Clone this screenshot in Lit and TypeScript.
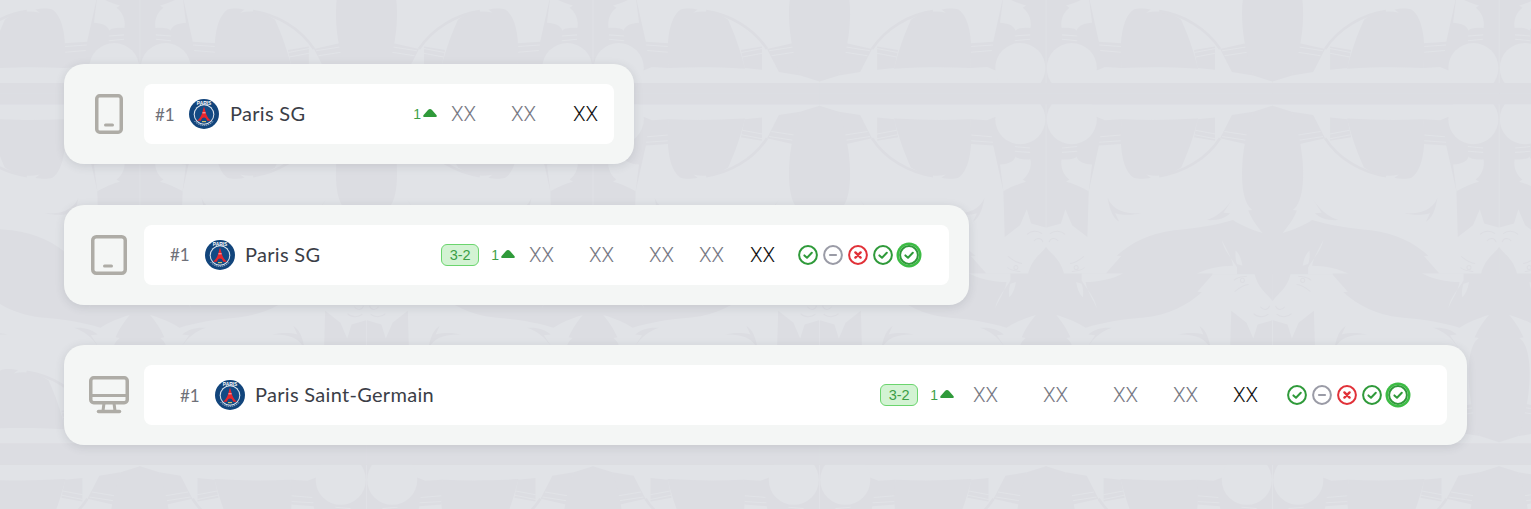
import { LitElement, css, html, svg } from 'lit';
import { customElement, property } from 'lit/decorators.js';

type Form = 'win' | 'draw' | 'loss';

const FORM: Form[] = ['win', 'draw', 'loss', 'win', 'win'];

// backdrop: one traced cell, coordinates are 2.953x screen px from x=1000
const cell = svg`
  <g clip-path="url(#cell-clip)">
    <rect x="130" y="276" width="680" height="32" class="dk" />
    <path class="dk" d="M137 308 L152 308 L285 345 L310 355 L360 352 L358 425 L292 430 L262 565 L258 700 L213 665 L193 618 L180 660 L137 672 Z" />
    <circle class="lt" cx="212" cy="352" r="74" />
    <rect class="dk" x="130" y="276" width="680" height="32" />
    <path class="lt" d="M182 470 C200 472 222 470 226 462 C232 480 250 484 272 486 L262 565 C240 552 215 542 195 537 L205 530 C185 515 178 490 182 470 Z" />
    <path class="ln" d="M183 437 L228 433 M183 450 L228 447 M296 404 L358 399 M293 420 L358 416" />
    <path class="dk" d="M360 352 C352 420 358 500 395 525 C410 530 430 528 445 525 L432 515 C470 525 505 515 535 495 C555 450 570 410 585 350 C500 355 430 355 360 352 Z" />
    <path class="arc" d="M470 520 C540 510 610 470 650 408" />
    <path class="dk" d="M584 352 L635 347 L635 416 L573 405 Z M685 340 L748 330 C740 365 730 395 725 425 L650 408 Z" />
    <path class="ln" d="M577 385 L636 396 M574 398 L636 410 M663 388 L730 399 M656 403 L727 414" />
    <path class="dk" d="M805 312 L748 330 C735 370 720 420 716 480 C712 540 718 585 735 610 L745 620 L733 622 C745 650 760 670 775 688 C745 680 710 665 688 650 C640 665 580 675 515 680 C440 690 390 715 345 755 L358 756 L315 805 L313 812 L808 812 L808 312 Z" />
    <path class="lt" d="M655 708 C665 730 685 760 688 785 C650 785 600 795 570 815 L700 815 L700 790 C690 770 660 740 655 708 Z M696 740 C708 750 714 770 716 785 L700 780 C696 770 694 755 696 740 Z" />
    <path class="dk" d="M685 590 C660 625 640 640 610 650 C640 652 665 645 680 630 L660 628 Z M318 585 C325 625 335 645 352 655 L340 630 C365 637 395 635 415 630 C375 632 335 625 318 585 Z" />
    <path class="dk" d="M137 730 C150 750 180 765 190 812 L130 812 L130 730 Z" />
    <path class="wh" d="M148 690 C160 680 180 680 192 692 M145 715 C150 700 165 702 172 712 M207 778 C215 778 232 770 248 757 M212 802 C225 800 240 800 250 790" />
    <circle class="wh" cx="225" cy="790" r="6" />
  </g>
`;

function backdrop() {
  const uses = [];
  const rows = [
    { d: 1, f: 0, shift: 0 },
    { d: -1, f: 553, shift: 0 },
    { d: -1, f: 1618, shift: 669 },
    { d: 1, f: 1065, shift: 669 },
  ];
  for (const r of rows) {
    for (let k = -4; k <= 2; k++) {
      const e = k * 1338 + r.shift;
      uses.push(svg`<use href="#cell" transform="matrix(1 0 0 ${r.d} ${e} ${r.f})" />`);
      uses.push(svg`<use href="#cell" transform="matrix(-1 0 0 ${r.d} ${1610 + e} ${r.f})" />`);
    }
  }
  return html`
    <svg class="backdrop" width="1531" height="509" viewBox="0 0 1531 509" aria-hidden="true">
      <defs>
        <clipPath id="cell-clip"><rect x="136" y="276" width="670" height="534" /></clipPath>
        <g id="cell">${cell}</g>
      </defs>
      <g transform="translate(1000 0) scale(.3386)">${uses}</g>
    </svg>
  `;
}

@customElement('club-crest')
export class ClubCrest extends LitElement {
  static styles = css`
    :host {
      display: block;
      width: 30px;
      height: 30px;
      flex: none;
    }
    svg {
      display: block;
    }
    text {
      font: 700 4.8px 'Liberation Sans', sans-serif;
      fill: #fff;
    }
  `;

  render() {
    return html`
      <svg width="30" height="30" viewBox="0 0 30 30">
        <circle cx="15" cy="15" r="15" fill="#12457c" />
        <circle cx="15" cy="15.5" r="10.3" fill="#dfe6ee" />
        <circle cx="15" cy="15.5" r="9.3" fill="#134a85" />
        <text x="15" y="5.6" text-anchor="middle">PARIS</text>
        <path d="M15 7.5 L16.6 13 C17.4 16.4 19 19.4 22 21.8 L18.2 21.8 C17.6 19.6 16.4 18.4 15 18.4 C13.6 18.4 12.4 19.6 11.8 21.8 L8 21.8 C11 19.4 12.6 16.4 13.4 13 Z" fill="#e8262d" />
        <path d="M13.4 13.8 H16.6" stroke="#fff" stroke-width=".7" />
        <path d="M13 22.6 H17" stroke="#d8c46a" stroke-width="1.1" />
        <path d="M5.5 22 A12.4 12.4 0 0 0 24.5 22" fill="none" stroke="#a9bdd4" stroke-width="1" stroke-dasharray="1.4 .7" />
      </svg>
    `;
  }
}

@customElement('form-dot')
export class FormDot extends LitElement {
  @property({ type: String }) result: Form = 'win';
  @property({ type: Boolean, reflect: true }) latest = false;

  static styles = css`
    :host {
      display: block;
      width: 20px;
      height: 20px;
      flex: none;
      box-sizing: border-box;
      border-radius: 50%;
    }
    :host([latest]) {
      box-shadow: 0 0 0 2.5px #3cbc44;
    }
    svg {
      display: block;
    }
    .win {
      stroke: #2f9a3a;
    }
    .draw {
      stroke: #9a9ba6;
    }
    .loss {
      stroke: #e13138;
    }
  `;

  render() {
    const mark =
      this.result === 'win'
        ? svg`<path d="M6.4 10.4 L9 12.8 L13.8 7.8" stroke-width="2" />`
        : this.result === 'draw'
          ? svg`<path d="M7 10 H13" stroke-width="2.2" />`
          : svg`<path d="M7.4 7.4 L12.6 12.6 M12.6 7.4 L7.4 12.6" stroke-width="2.4" />`;
    return html`
      <svg class=${this.result} width="20" height="20" viewBox="0 0 20 20" fill="none" stroke-linecap="round" stroke-linejoin="round">
        <circle cx="10" cy="10" r="8.9" stroke-width="2" />
        ${mark}
      </svg>
    `;
  }
}

@customElement('app-root')
export class AppRoot extends LitElement {
  static styles = css`
    :host {
      display: block;
      position: relative;
      width: 1531px;
      height: 509px;
      overflow: hidden;
      background: #e1e3e7;
      font-family: Lato, 'Liberation Sans', sans-serif;
    }
    .backdrop {
      position: absolute;
      inset: 0;
    }
    .backdrop .dk {
      fill: #dcdde2;
    }
    .backdrop .lt {
      fill: #e1e3e7;
    }
    .backdrop .ln {
      fill: none;
      stroke: #e1e3e7;
      stroke-width: 3;
    }
    .backdrop .arc {
      fill: none;
      stroke: #dcdde2;
      stroke-width: 8;
    }
    .backdrop .wh {
      fill: none;
      stroke: #dcdde2;
      stroke-width: 3;
    }
    .page {
      position: relative;
      display: flex;
      flex-direction: column;
      align-items: flex-start;
      gap: 40.5px;
      padding: 64px;
    }
    .card {
      display: flex;
      align-items: center;
      gap: 15px;
      box-sizing: border-box;
      height: 100px;
      padding: 20px 20px 20px 25px;
      background: #f4f6f5;
      border-radius: 20px;
      box-shadow: 0 2px 10px rgba(60, 64, 80, 0.14);
    }
    .card.mobile {
      width: 570px;
    }
    .card.tablet {
      width: 905px;
    }
    .card.desktop {
      width: 1403px;
    }
    .device {
      display: flex;
      justify-content: center;
      width: 40px;
      flex: none;
    }
    .device svg {
      display: block;
    }
    .row {
      flex: 1;
      display: flex;
      align-items: center;
      box-sizing: border-box;
      height: 60px;
      background: #fff;
      border-radius: 8px;
    }
    .mobile .row {
      padding-left: 11px;
    }
    .tablet .row {
      padding-left: 26px;
    }
    .desktop .row {
      padding-left: 36px;
    }
    .rank {
      width: 34px;
      flex: none;
      font-size: 17px;
      color: #6f7179;
    }
    .tablet .rank,
    .desktop .rank {
      width: 35px;
    }
    .name {
      margin: -2px 0 0 11px;
      font-size: 20px;
      letter-spacing: 0.3px;
      color: #3b3e47;
    }
    .tablet .name,
    .desktop .name {
      margin-left: 10px;
    }
    .trail {
      margin-left: auto;
      display: flex;
      align-items: center;
    }
    .badge {
      box-sizing: border-box;
      width: 38px;
      height: 22px;
      margin-right: 12px;
      display: flex;
      align-items: center;
      justify-content: center;
      font: 14.5px 'Liberation Sans', sans-serif;
      color: #3c9f46;
      background: #d3f3d3;
      border: 1.5px solid #6bd56e;
      border-radius: 6px;
    }
    .move {
      display: flex;
      align-items: center;
      gap: 2px;
      font: 14px 'Liberation Sans', sans-serif;
      color: #3f9f48;
    }
    .move svg {
      display: block;
      margin-top: -2px;
    }
    .stats {
      display: grid;
      margin-left: 14px;
      font: 300 20.5px Roboto, 'Liberation Sans', sans-serif;
      color: #777984;
    }
    .desktop .stats {
      margin-left: 19px;
    }
    .mobile .stats {
      grid-template-columns: 60px 62px 41px;
    }
    .tablet .stats {
      grid-template-columns: 60px 60px 50px 51px 48px;
    }
    .desktop .stats {
      grid-template-columns: 70px 70px 60px 60px 54px;
    }
    .stats .total {
      color: #111;
    }
    .form {
      display: flex;
      align-items: center;
      gap: 5px;
    }
    .tablet .form {
      margin-right: 30px;
    }
    .desktop .form {
      margin-right: 39px;
    }
    .form form-dot:last-child {
      margin-left: 1px;
    }
  `;

  private deviceIcon(kind: string) {
    if (kind === 'mobile') {
      return html`<svg width="28" height="40" viewBox="0 0 28 40" fill="none" stroke="#aeaca6">
        <rect x="1.75" y="1.75" width="24.5" height="36.5" rx="3" stroke-width="3.5" />
        <path d="M10.5 31 H17.5" stroke-width="3" stroke-linecap="round" />
      </svg>`;
    }
    if (kind === 'tablet') {
      return html`<svg width="36" height="40" viewBox="0 0 36 40" fill="none" stroke="#aeaca6">
        <rect x="1.75" y="1.75" width="32.5" height="36.5" rx="3.5" stroke-width="3.5" />
        <path d="M13.5 31 H20.5" stroke-width="3" stroke-linecap="round" />
      </svg>`;
    }
    return html`<svg width="40" height="38" viewBox="0 0 40 38" fill="none" stroke="#aeaca6" stroke-width="3.5">
      <rect x="1.75" y="1.75" width="36.5" height="25" rx="3" />
      <path d="M1.75 19.5 H38.25" stroke-width="3" />
      <path d="M15 27 L14 35 M25 27 L26 35" stroke-width="3" />
      <path d="M9.5 35.5 H30.5" stroke-linecap="round" />
    </svg>`;
  }

  private card(kind: 'mobile' | 'tablet' | 'desktop', name: string) {
    const wide = kind !== 'mobile';
    const stats = wide ? ['XX', 'XX', 'XX', 'XX', 'XX'] : ['XX', 'XX', 'XX'];
    return html`
      <section class="card ${kind}">
        <div class="device">${this.deviceIcon(kind)}</div>
        <div class="row">
          <span class="rank">#1</span>
          <club-crest></club-crest>
          <span class="name">${name}</span>
          <div class="trail">
            ${wide ? html`<span class="badge">3-2</span>` : null}
            <span class="move">
              1
              <svg width="14" height="8" viewBox="0 0 14 8"><path d="M7 0 C7.8 0 8.4 .5 9 1.1 L13.4 6 C14.2 7 13.7 8 12.6 8 H1.4 C.3 8 -.2 7 .6 6 L5 1.1 C5.6 .5 6.2 0 7 0 Z" fill="#2f9a3a" /></svg>
            </span>
            <div class="stats">
              ${stats.map((s, i) => html`<span class=${i === stats.length - 1 ? 'total' : ''}>${s}</span>`)}
            </div>
            ${wide
              ? html`<div class="form">
                  ${FORM.map((r, i) => html`<form-dot result=${r} ?latest=${i === FORM.length - 1}></form-dot>`)}
                </div>`
              : null}
          </div>
        </div>
      </section>
    `;
  }

  render() {
    return html`
      ${backdrop()}
      <main class="page">
        ${this.card('mobile', 'Paris SG')}
        ${this.card('tablet', 'Paris SG')}
        ${this.card('desktop', 'Paris Saint-Germain')}
      </main>
    `;
  }
}
